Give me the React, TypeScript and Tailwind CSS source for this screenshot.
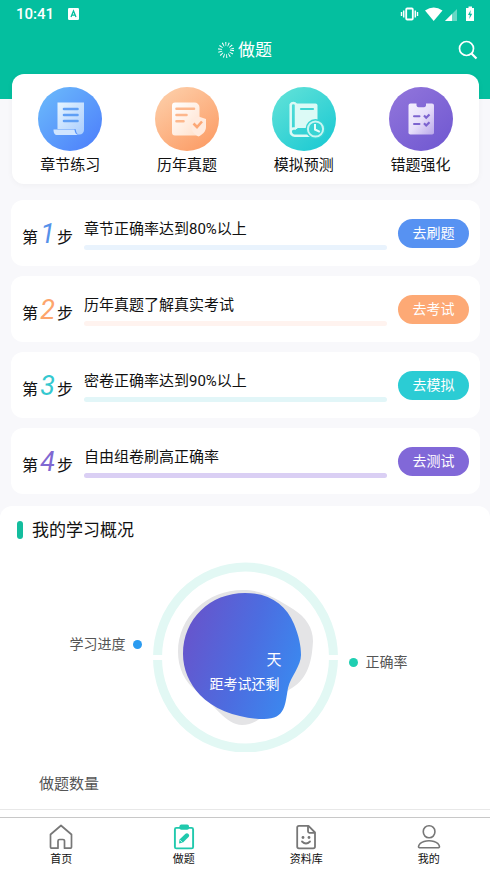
import React from "react";

type Step = {
  id: number;
  title: string;
  action: string;
  numberColor: string;
  track: string;
  button: string;
};

const steps: Step[] = [
  { id: 1, title: "章节正确率达到80%以上", action: "去刷题", numberColor: "text-[#5591ea]", track: "bg-[#e9f3fd]", button: "bg-[#5792f2]" },
  { id: 2, title: "历年真题了解真实考试", action: "去考试", numberColor: "text-[#fda56c]", track: "bg-[#fff3ef]", button: "bg-[#fda975]" },
  { id: 3, title: "密卷正确率达到90%以上", action: "去模拟", numberColor: "text-[#35c8cf]", track: "bg-[#e2f6f8]", button: "bg-[#2bccd4]" },
  { id: 4, title: "自由组卷刷高正确率", action: "去测试", numberColor: "text-[#8068d2]", track: "bg-[#dacff4]", button: "bg-[#8168d8]" },
];

function ChapterIcon() {
  return (
    <svg viewBox="0 0 64 64" className="size-16" aria-hidden="true">
      <defs>
        <linearGradient id="chapterBg" x1="0.1" y1="0.1" x2="0.9" y2="0.9">
          <stop offset="0" stopColor="#69b6fb" />
          <stop offset="1" stopColor="#4f83fb" />
        </linearGradient>
        <linearGradient id="chapterPaper" x1="0" y1="0" x2="1" y2="1">
          <stop offset="0" stopColor="#e6f4ff" />
          <stop offset="1" stopColor="#a9cdfd" />
        </linearGradient>
      </defs>
      <circle cx="32" cy="32" r="32" fill="url(#chapterBg)" />
      <path d="M19.500 15.500H46V43a4.500 4.500 0 0 1-4.500 4.500C38.500 47.500 38.500 45 37.500 42H19.500Z" fill="url(#chapterPaper)" />
      <path d="M15.500 42.500H36.500C37 46 38 47.500 41 48H19.500C16.500 48 15.500 46 15.500 42.500Z" fill="#cfe5ff" />
      <path d="M26 22H39.500M26 28H39.500M26 34H39.500" stroke="#5f9ff5" strokeWidth="2.600" strokeLinecap="round" />
    </svg>
  );
}

function PastPaperIcon() {
  return (
    <svg viewBox="0 0 64 64" className="size-16" aria-hidden="true">
      <defs>
        <linearGradient id="pastBg" x1="0.2" y1="0.1" x2="0.8" y2="0.95">
          <stop offset="0" stopColor="#fdcaa3" />
          <stop offset="1" stopColor="#fc9e68" />
        </linearGradient>
        <linearGradient id="pastPaper" x1="0" y1="0" x2="1" y2="1">
          <stop offset="0" stopColor="#ffffff" />
          <stop offset="1" stopColor="#ffe0cb" />
        </linearGradient>
      </defs>
      <circle cx="32" cy="32" r="32" fill="url(#pastBg)" />
      <path d="M20 15.500H39.500A5 5 0 0 1 44.500 20.500V48.500H20A3 3 0 0 1 17 45.500V18.500A3 3 0 0 1 20 15.500Z" fill="url(#pastPaper)" />
      <path d="M43.500 29.500L51 32V40C51 44.500 47.500 47.500 43.500 49.500C39.500 47.500 36.500 44.500 36.500 40V32Z" fill="#ffeade" />
      <path d="M21.500 21.800H39M21.500 28H31.500M21.500 34.200H28.500" stroke="#fdb78c" strokeWidth="2.600" strokeLinecap="round" />
      <path d="M38.500 36.500L42 40L47 34.500" fill="none" stroke="#fca877" strokeWidth="2.600" />
    </svg>
  );
}

function MockIcon() {
  return (
    <svg viewBox="0 0 64 64" className="size-16" aria-hidden="true">
      <defs>
        <linearGradient id="mockBg" x1="0.1" y1="0" x2="0.85" y2="0.95">
          <stop offset="0" stopColor="#62e2d8" />
          <stop offset="1" stopColor="#1dcad3" />
        </linearGradient>
      </defs>
      <circle cx="32" cy="32" r="32" fill="url(#mockBg)" />
      <path d="M24 16.500H43.500A2 2 0 0 1 45.500 18.500V41H24Z" fill="#dcfaf6" />
      <path d="M24 42V17.500A3 3 0 0 0 18.700 17.500V44.500A4 4 0 0 0 22.700 48.700H38M24 41.500H21.500A2.800 2.800 0 0 0 18.700 44.300" fill="none" stroke="#dcfaf6" strokeWidth="2.500" />
      <path d="M29 22H41" stroke="#43d6d4" strokeWidth="2.200" strokeLinecap="round" />
      <circle cx="43.500" cy="42" r="10" fill="#38d4d3" />
      <circle cx="43.500" cy="42" r="7.600" fill="#38d4d3" stroke="#c9f6f3" strokeWidth="2" />
      <path d="M43 37V42.500L47.800 44.800" fill="none" stroke="#e9fdfa" strokeWidth="2" />
    </svg>
  );
}

function MistakeIcon() {
  return (
    <svg viewBox="0 0 64 64" className="size-16" aria-hidden="true">
      <defs>
        <linearGradient id="mistakeBg" x1="0.1" y1="0" x2="0.9" y2="1">
          <stop offset="0" stopColor="#9175db" />
          <stop offset="1" stopColor="#7058d1" />
        </linearGradient>
        <linearGradient id="mistakePaper" x1="0" y1="0" x2="1" y2="1">
          <stop offset="0" stopColor="#f5f1ff" />
          <stop offset="0.5" stopColor="#e7dffa" />
          <stop offset="1" stopColor="#b9a7e9" />
        </linearGradient>
      </defs>
      <circle cx="32" cy="32" r="32" fill="url(#mistakeBg)" />
      <path d="M21.500 16.500H27.500V18.500A2 2 0 0 0 29.500 20.200H35A2 2 0 0 0 37 18.500V16.500H43A2 2 0 0 1 45 18.500V45A2 2 0 0 1 43 47.500H21.500A2 2 0 0 1 19.500 45V18.500A2 2 0 0 1 21.500 16.500Z" fill="url(#mistakePaper)" />
      <path d="M25 29.200H30.500M25 37H30.500" stroke="#7c63cf" strokeWidth="2" strokeLinecap="round" />
      <path d="M35 28.500L37.200 30.700L40.500 27.500M35 36.300L37.200 38.500L40.500 35.300" fill="none" stroke="#7c63cf" strokeWidth="2.200" />
    </svg>
  );
}

const shortcuts = [
  { label: "章节练习", Icon: ChapterIcon },
  { label: "历年真题", Icon: PastPaperIcon },
  { label: "模拟预测", Icon: MockIcon },
  { label: "错题强化", Icon: MistakeIcon },
];

function HomeIcon() {
  return (
    <svg viewBox="0 0 24 26" className="h-[26px] w-6" fill="none" stroke="#777" strokeWidth="1.700" strokeLinejoin="round" aria-hidden="true">
      <path d="M1.500 10.500L12 1.500L22.500 10.500V23A1.200 1.200 0 0 1 21.300 24.200H15.500V17A1.500 1.500 0 0 0 14 15.500H10.500A1.500 1.500 0 0 0 9 17V24.200H2.700A1.200 1.200 0 0 1 1.500 23Z" />
    </svg>
  );
}

function PracticeIcon() {
  return (
    <svg viewBox="0 0 24 26" className="h-[26px] w-6" aria-hidden="true">
      <rect x="2.900" y="3.900" width="18.200" height="20.500" rx="1.500" fill="none" stroke="#20c9ad" strokeWidth="1.900" />
      <rect x="7.500" y="0.500" width="9.500" height="5.200" rx="1.800" fill="#20c9ad" />
      <path d="M7 19.500L7.500 15.500L13.500 9.800Q15 8.800 16.500 10Q17.800 11.300 16.800 12.800L11 18.500Z" fill="#20c9ad" />
      <path d="M7.700 15.800L10.500 18.500" stroke="#fff" strokeWidth="0.700" />
    </svg>
  );
}

function LibraryIcon() {
  return (
    <svg viewBox="0 0 24 26" className="h-[26px] w-6" fill="none" stroke="#777" strokeWidth="1.800" strokeLinejoin="round" aria-hidden="true">
      <path d="M5 1.800H14.500L21 8.500V22.500A1.800 1.800 0 0 1 19.200 24.300H5A1.800 1.800 0 0 1 3.200 22.500V3.600A1.800 1.800 0 0 1 5 1.800Z" />
      <path d="M14 2V7.300A1.500 1.500 0 0 0 15.500 8.800H21" />
      <path d="M8 17.500Q12 21.500 16 17.500" strokeLinecap="round" />
      <circle cx="9" cy="13.500" r="1.400" fill="#777" stroke="none" />
      <circle cx="15" cy="13.500" r="1.400" fill="#777" stroke="none" />
    </svg>
  );
}

function ProfileIcon() {
  return (
    <svg viewBox="0 0 24 26" className="h-[26px] w-6" fill="none" stroke="#777" strokeWidth="1.600" aria-hidden="true">
      <rect x="6.300" y="1.700" width="11.600" height="12" rx="5.600" />
      <path d="M3.200 23.800C0.800 23.800 1.200 21.500 3 19.700Q6.500 16.700 12 16.700Q17.500 16.700 21 19.700C22.800 21.500 23.200 23.800 20.800 23.800Z" />
    </svg>
  );
}

const tabs = [
  { label: "首页", Icon: HomeIcon },
  { label: "做题", Icon: PracticeIcon },
  { label: "资料库", Icon: LibraryIcon },
  { label: "我的", Icon: ProfileIcon },
];

function StatusBar() {
  return (
    <div className="flex h-7 items-center justify-between pr-[15px] pl-4 text-white">
      <div className="flex items-center gap-[14px]">
        <span className="text-[15px] leading-5 font-medium">10:41</span>
        <svg viewBox="0 0 11 12" className="h-3 w-[11px]" aria-hidden="true">
          <rect width="11" height="12" rx="1.200" fill="#fff" />
          <path d="M3 9L5.500 3L8 9M4 7.200H7" fill="none" stroke="#04bf9f" strokeWidth="1.300" />
        </svg>
      </div>
      <svg viewBox="0 0 76 16" className="h-4 w-[76px]" aria-hidden="true">
        <g fill="none" stroke="#fff">
          <rect x="7.200" y="2.500" width="6.600" height="11" rx="1" strokeWidth="1.800" />
          <path d="M4.700 4.500V11.500M16.300 4.500V11.500" strokeWidth="1.500" />
          <path d="M2.500 6V10M18.500 6V10" strokeWidth="1.400" />
        </g>
        <path d="M26 4.500Q34.700 -1.500 43.500 4.500L34.700 15Z" fill="#fff" />
        <path d="M46 15L58 3V15Z" fill="#fff" opacity="0.4" />
        <path d="M46 15L53 8V15Z" fill="#fff" />
        <path d="M69.500 0.500H73V2H75V15H67V2H69.500Z" fill="#fff" />
        <path d="M71.700 4L69 9H70.800L70.300 13L73.200 7.800H71.300Z" fill="#04bf9f" />
      </svg>
    </div>
  );
}

function Countdown() {
  return (
    <div className="relative shrink-0">
      <svg viewBox="0 0 186 190" className="h-[190px] w-[186px]" aria-hidden="true">
        <defs>
          <linearGradient id="blob" x1="0.05" y1="0.35" x2="1" y2="0.7">
            <stop offset="0" stopColor="#6457ce" />
            <stop offset="0.5" stopColor="#4c6de0" />
            <stop offset="1" stopColor="#3a8af0" />
          </linearGradient>
        </defs>
        <ellipse cx="93.500" cy="95.500" rx="88" ry="90.500" fill="none" stroke="#e2f8f4" strokeWidth="9" />
        <path d="M0 95.500H186" stroke="#fff" strokeWidth="5" />
        <path d="M91 28C112 28 125 37 141 47C154 55 161 66 161 79C160 99 156 116 140 126C125 134 113 163 90 163C74 163 62 142 46 130C32 120 26 105 26 90C26 55 55 28 91 28Z" fill="#e4e4e6" />
        <path d="M93 31C118 31 134 43 142 62C147 74 149 84 149 93C149 104 139 114 136 126C133 142 134 157 112 157C88 157 62 148 48 133C37 121 31 107 31 92C31 57 58 31 93 31Z" fill="url(#blob)" />
      </svg>
      <div className="absolute top-[86px] left-[58px] w-[72px] text-white">
        <p className="text-right text-[15px] leading-6">天</p>
        <p className="text-sm leading-6">距考试还剩</p>
      </div>
    </div>
  );
}

export default function App() {
  return (
    <div className="flex min-h-screen flex-col bg-[#f8f8fb] font-[Roboto,'Noto_Sans_CJK_SC',sans-serif] text-[#111]">
      <header className="bg-[#04bf9f] pb-[27px] text-white">
        <StatusBar />
        <div className="grid h-11 grid-cols-[1fr_auto_1fr] items-center px-3">
          <h1 className="col-start-2 flex items-center gap-1 text-[17px] leading-6">
            <svg viewBox="0 0 16 16" className="size-4" fill="none" aria-hidden="true">
              <circle cx="8" cy="8" r="6" stroke="#fff" strokeWidth="4" strokeDasharray="0.900 1.793" />
            </svg>
            做题
          </h1>
          <button type="button" aria-label="搜索" className="justify-self-end">
            <svg viewBox="0 0 20 20" className="size-5" fill="none" stroke="#fff" aria-hidden="true">
              <circle cx="8.500" cy="8.500" r="7" strokeWidth="1.700" />
              <path d="M13.500 13.500L18.500 18.500" strokeWidth="2.200" />
            </svg>
          </button>
        </div>
      </header>

      <main className="flex flex-1 flex-col">
        <div className="-mt-[25px] pr-[11px] pl-3">
          <div className="grid grid-cols-4 rounded-xl bg-white pt-[13px] pb-[9px] shadow-[0_1px_6px_rgba(0,0,0,0.04)]">
            {shortcuts.map(({ label, Icon }) => (
              <button type="button" key={label} className="flex flex-col items-center gap-1 text-[15px] leading-5">
                <Icon />
                {label}
              </button>
            ))}
          </div>
        </div>

        <ul className="mt-4 flex flex-col gap-[10px] pr-[10px] pl-[11px]">
          {steps.map((step) => (
            <li key={step.id} className="flex h-[66px] items-center rounded-xl bg-white px-[11px]">
              <div className="flex w-[62px] shrink-0 items-baseline pt-[5px] text-base leading-8">
                第
                <span className={`w-[19px] text-center text-[27px] italic ${step.numberColor}`}>{step.id}</span>
                步
              </div>
              <div className="flex min-w-0 flex-1 flex-col gap-1">
                <p className="text-[15px] leading-6">{step.title}</p>
                <div className={`h-[5px] rounded-full ${step.track}`} />
              </div>
              <button type="button" className={`ml-[11px] h-[29px] w-[71px] shrink-0 rounded-full text-sm text-white ${step.button}`}>
                {step.action}
              </button>
            </li>
          ))}
        </ul>

        <section className="mt-3 flex-1 rounded-t-xl bg-white pt-3">
          <h2 className="flex items-center gap-[9px] px-[17px] text-[17px] leading-6">
            <span className="h-[18px] w-[6px] rounded-full bg-[#13bd9e]" />
            我的学习概况
          </h2>
          <div className="mt-5 flex items-center text-sm leading-5 text-[#555]">
            <div className="flex flex-1 items-center justify-end gap-[7px] pr-[10px] pb-[26px]">
              学习进度
              <span className="size-[9px] rounded-full bg-[#2b9bf0]" />
            </div>
            <Countdown />
            <div className="flex flex-1 items-center gap-2 pt-[10px] pl-[11px]">
              <span className="size-[9px] rounded-full bg-[#1fcfb2]" />
              正确率
            </div>
          </div>
          <h3 className="mt-5 border-b border-[#e8e8e8] px-[39px] pb-[13px] text-[15px] leading-6 text-[#555]">做题数量</h3>
        </section>
      </main>

      <nav className="grid h-[55px] grid-cols-4 border-t border-[#c8c8c8] bg-white">
        {tabs.map(({ label, Icon }) => (
          <a key={label} href="#" className="flex flex-col items-center gap-[2px] pt-[6px] text-[11px] leading-4">
            <Icon />
            {label}
          </a>
        ))}
      </nav>
    </div>
  );
}
